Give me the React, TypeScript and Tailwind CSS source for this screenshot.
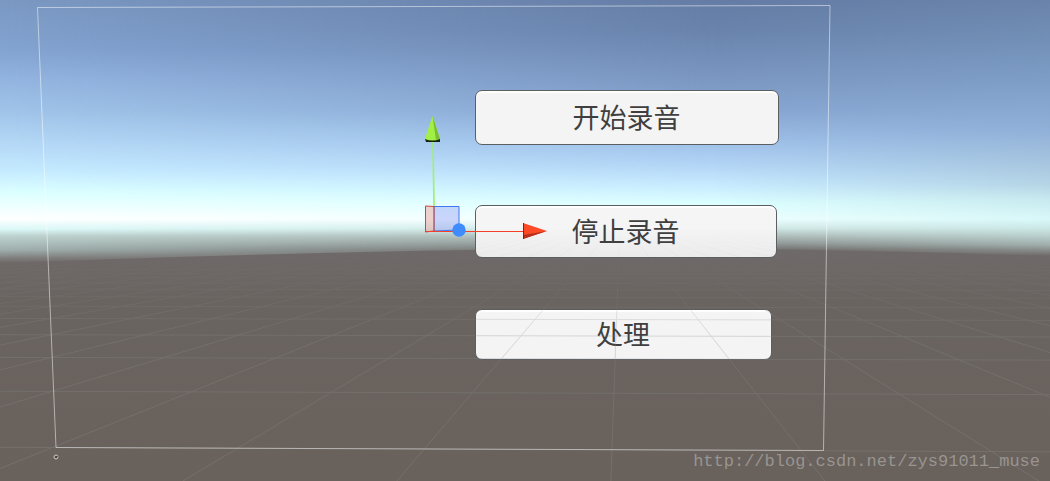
import React from "react";

type Stop = [number, string];

const W = 1050;
const H = 481;
const VANISH = { x: 620, y: 220 };

const skyLeft: Stop[] = [
  [0, "#7a98c2"], [50, "#83a3d0"], [80, "#93b4e0"], [110, "#9fc3e8"], [150, "#b8dcf8"],
  [170, "#c4eaff"], [192, "#dbffff"], [219, "#ffffff"], [229, "#dcf9f8"], [236, "#bdd2ce"],
  [250, "#9fafad"], [258, "#807f7e"], [263, "#6e6968"],
];
const skyMiddle: Stop[] = [
  [0, "#657da6"], [30, "#6983ac"], [60, "#7490ba"], [85, "#7d9ac5"], [110, "#86a5d1"],
  [140, "#9dbfe8"], [165, "#b3d5f6"], [185, "#c8ebff"], [203, "#dcffff"], [219, "#efffff"],
  [228, "#d3e9e7"], [236, "#aebcb9"], [243, "#8f9795"], [250, "#6e6968"],
];
const skyRight: Stop[] = [
  [0, "#6a83ab"], [40, "#7290b7"], [80, "#7e9dc6"], [130, "#91b0d8"], [160, "#a4c3de"],
  [185, "#b5d5e6"], [200, "#c8eaef"], [219, "#d8f8f9"], [228, "#cbe8e6"], [236, "#b9cfcc"],
  [245, "#9fadab"], [256, "#6e6968"],
];

function VerticalGradient({ id, stops }: { id: string; stops: Stop[] }) {
  return (
    <linearGradient id={id} gradientUnits="userSpaceOnUse" x1="0" y1="0" x2="0" y2={H}>
      {stops.map(([y, color]) => (
        <stop key={y} offset={y / H} stopColor={color} />
      ))}
    </linearGradient>
  );
}

function Skybox() {
  return (
    <svg
      className="absolute inset-0 h-full w-full"
      viewBox={`0 0 ${W} ${H}`}
      preserveAspectRatio="none"
      aria-hidden="true"
    >
      <defs>
        <VerticalGradient id="skyLeft" stops={skyLeft} />
        <VerticalGradient id="skyMiddle" stops={skyMiddle} />
        <VerticalGradient id="skyRight" stops={skyRight} />
        <VerticalGradient id="ground" stops={[[248, "#6f6a6a"], [300, "#6a6460"], [481, "#69615c"]]} />
        <linearGradient id="fadeLeft">
          <stop offset="0" stopColor="#fff" />
          <stop offset="0.68" stopColor="#000" />
        </linearGradient>
        <linearGradient id="fadeRight">
          <stop offset="0.68" stopColor="#000" />
          <stop offset="1" stopColor="#fff" />
        </linearGradient>
        <mask id="maskLeft">
          <rect width={W} height={H} fill="url(#fadeLeft)" />
        </mask>
        <mask id="maskRight">
          <rect width={W} height={H} fill="url(#fadeRight)" />
        </mask>
      </defs>
      <rect width={W} height={H} fill="url(#skyMiddle)" />
      <rect width={W} height={H} fill="url(#skyLeft)" mask="url(#maskLeft)" />
      <rect width={W} height={H} fill="url(#skyRight)" mask="url(#maskRight)" />
      <path d="M0 263 Q350 250 620 248 Q850 249 1050 256 V481 H0 Z" fill="url(#ground)" />
    </svg>
  );
}

function FloorGrid() {
  const depth = H - VANISH.y;
  const rays = Array.from({ length: 33 }, (_, i) => 0.035 + (i - 16) * 0.82);
  const rows = Array.from({ length: 12 }, (_, i) => 1 / (0.0044 + i * 0.00144));
  return (
    <g stroke="#8a8c8a" strokeWidth="1" mask="url(#gridMask)">
      {rays.map((k) => (
        <line key={k} x1={VANISH.x} y1={VANISH.y} x2={VANISH.x - k * depth} y2={H} />
      ))}
      {rows.map((d) => (
        <line key={d} x1="0" y1={VANISH.y + d} x2={W} y2={VANISH.y + d * 1.02} />
      ))}
    </g>
  );
}

function MoveGizmo() {
  return (
    <g>
      <path d="M433 141 L434 206" stroke="#9df266" strokeWidth="1.6" />
      <path d="M434 206.500 H459 V230 L434 231 Z" fill="#8f9cf2" fillOpacity="0.42" stroke="#3f78f0" />
      <path d="M425.500 206 L434 206.500 V231 L425.500 232 Z" fill="#e9a49a" fillOpacity="0.5" stroke="#d0453a" />
      <rect x="426" y="231" width="98" height="1" fill="#f4402a" />
      <circle cx="459" cy="230" r="6.700" fill="#3f8cff" />
      <path d="M432.500 116 L440 139 L439 141 L426 141 L425 139 Z" fill="#a2ef45" />
      <path d="M432.500 116 L440 139 L436 140 Z" fill="#79bd35" />
      <path d="M425 139 Q432.500 142 440 139 L440 142 H426 Z" fill="#15240a" />
      <path d="M523 223 L547 231 L523 239 Z" fill="#ff4a26" />
      <path d="M523 239 L547 231 L523 235 Z" fill="#b8301c" />
      <path d="M523.500 223 V239" stroke="#7d2418" strokeWidth="1" />
    </g>
  );
}

function SceneOverlay() {
  return (
    <svg
      className="pointer-events-none absolute inset-0 h-full w-full"
      viewBox={`0 0 ${W} ${H}`}
      preserveAspectRatio="none"
      fill="none"
      aria-hidden="true"
    >
      <defs>
        <linearGradient id="gridFade" gradientUnits="userSpaceOnUse" x1="0" y1="232" x2="0" y2="481">
          <stop offset="0" stopColor="#000" />
          <stop offset="0.15" stopColor="#121212" />
          <stop offset="0.3" stopColor="#2c2c2c" />
          <stop offset="0.42" stopColor="#4c4c4c" />
          <stop offset="1" stopColor="#5a5a5a" />
        </linearGradient>
        <mask id="gridMask" maskUnits="userSpaceOnUse" x="0" y="0" width={W} height={H}>
          <rect width={W} height={H} fill="url(#gridFade)" />
        </mask>
      </defs>
      <FloorGrid />
      <path d="M37.500 7.500 L830 5.500 L823.500 450.500 L56 447.500 Z" stroke="#fff" strokeOpacity="0.5" />
      <circle cx="56" cy="457" r="2" stroke="#c9c6c3" />
      <path d="M55 457 H57 V456" stroke="#333" />
      <MoveGizmo />
    </svg>
  );
}

function SceneButton({ label, className }: { label: string; className: string }) {
  return (
    <button
      type="button"
      className={`flex items-center justify-center rounded-[7px] border border-[#5c5f62] pb-0.5 text-[27px] leading-8 text-[#3f3f3f] shadow-[inset_0_2px_1px_#ffffff] ${className}`}
    >
      {label}
    </button>
  );
}

export default function App() {
  return (
    <main className="relative flex min-h-screen flex-col overflow-hidden bg-[#69615c] font-['Noto_Sans_CJK_SC',sans-serif]">
      <Skybox />
      <div className="relative flex flex-col items-start pt-[90px] pl-[45.2%]">
        <SceneButton label="开始录音" className="h-[55px] w-[304px] bg-[#f4f4f4]" />
        <SceneButton
          label="停止录音"
          className="mt-[60px] h-[53px] w-[302px] bg-linear-to-b from-[#f5f5f5] from-40% to-[#ebebeb]"
        />
        <SceneButton label="处理" className="mt-[51px] h-[51px] w-[297px] bg-[#f4f4f4]" />
      </div>
      <SceneOverlay />
      <footer className="relative mt-auto self-end pr-[10px] pb-[7px]">
        <a
          href="http://blog.csdn.net/zys91011_muse"
          className="block font-['Liberation_Mono',monospace] text-[17px] leading-6 text-[#989490]"
        >
          http://blog.csdn.net/zys91011_muse
        </a>
      </footer>
    </main>
  );
}
